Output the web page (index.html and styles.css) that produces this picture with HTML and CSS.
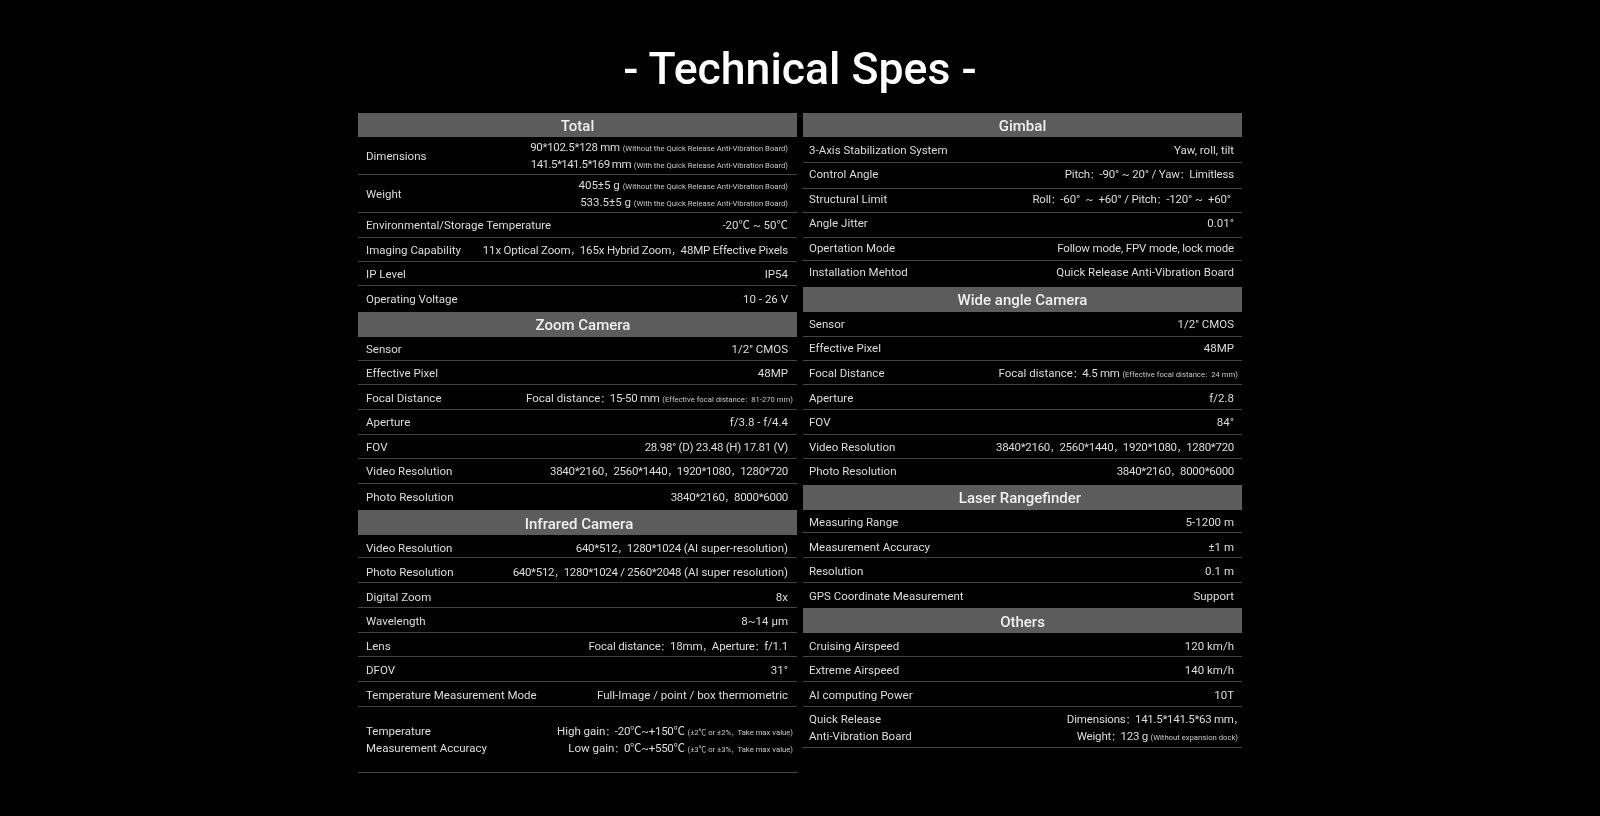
FILE: index.html
```html
<!DOCTYPE html>
<html lang="en">
<head>
<meta charset="utf-8">
<title>Technical Spes</title>
<link rel="stylesheet" href="styles.css">
</head>
<body>
<main class="page">
  <h1 class="title">- Technical Spes -</h1>
  <div class="columns">
    <section class="col col-left">
      <h2 class="head">Total</h2>
      <div class="row"><span>Dimensions</span><span class="val"><b class="nums">90*102.5*128 mm</b> <small>(Without the Quick Release Anti-Vibration Board)</small><br><b class="nums tight">141.5*141.5*169 mm</b> <small>(With the Quick Release Anti-Vibration Board)</small></span></div>
      <div class="row"><span>Weight</span><span class="val">405±5 g <small>(Without the Quick Release Anti-Vibration Board)</small><br>533.5±5 g <small>(With the Quick Release Anti-Vibration Board)</small></span></div>
      <div class="row"><span>Environmental/Storage Temperature</span><span class="val">-20℃ ~ 50℃</span></div>
      <div class="row"><span>Imaging Capability</span><span class="val snug">11x Optical Zoom<i class="cn">，</i>165x Hybrid Zoom<i class="cn">，</i>48MP Effective Pixels</span></div>
      <div class="row"><span>IP Level</span><span class="val">IP54</span></div>
      <div class="row last"><span>Operating Voltage</span><span class="val">10 - 26 V</span></div>
      <h2 class="head off-r">Zoom Camera</h2>
      <div class="row"><span>Sensor</span><span class="val">1/2" CMOS</span></div>
      <div class="row"><span>Effective Pixel</span><span class="val">48MP</span></div>
      <div class="row over-s low"><span>Focal Distance</span><span class="val">Focal distance<i class="cn">：</i><b class="nums">15-50 mm</b> <small>(Effective focal distance<i class="cn">：</i>81-270 mm)</small></span></div>
      <div class="row"><span>Aperture</span><span class="val">f/3.8 - f/4.4</span></div>
      <div class="row"><span>FOV</span><span class="val nums">28.98° (D) 23.48 (H) 17.81 (V)</span></div>
      <div class="row"><span>Video Resolution</span><span class="val nums">3840*2160<i class="cn">，</i>2560*1440<i class="cn">，</i>1920*1080<i class="cn">，</i>1280*720</span></div>
      <div class="row last"><span>Photo Resolution</span><span class="val nums">3840*2160<i class="cn">，</i>8000*6000</span></div>
      <h2 class="head off-s down">Infrared Camera</h2>
      <div class="row lower"><span>Video Resolution</span><span class="val"><b class="nums">640*512<i class="cn">，</i>1280*1024</b> (AI super-resolution)</span></div>
      <div class="row lower"><span>Photo Resolution</span><span class="val"><b class="nums">640*512<i class="cn">，</i>1280*1024 / 2560*2048</b> (AI super resolution)</span></div>
      <div class="row lower"><span>Digital Zoom</span><span class="val">8x</span></div>
      <div class="row low"><span>Wavelength</span><span class="val">8~14 μm</span></div>
      <div class="row low"><span>Lens</span><span class="val snug">Focal distance<i class="cn">：</i>18mm<i class="cn">，</i>Aperture<i class="cn">：</i>f/1.1</span></div>
      <div class="row low"><span>DFOV</span><span class="val">31°</span></div>
      <div class="row low"><span>Temperature Measurement Mode</span><span class="val">Full-Image / point / box thermometric</span></div>
      <div class="row over-s"><span>Temperature<br>Measurement Accuracy</span><span class="val">High gain<i class="cn">：</i><b class="nums">-20℃~+150℃</b> <small>(±2℃ or ±2%<i class="cn">，</i>Take max value)</small><br>Low gain<i class="cn">：</i><b class="nums">0℃~+550℃</b> <small>(±3℃ or ±3%<i class="cn">，</i>Take max value)</small></span></div>
    </section>
    <section class="col col-right">
      <h2 class="head">Gimbal</h2>
      <div class="row"><span>3-Axis Stabilization System</span><span class="val">Yaw, roll, tilt</span></div>
      <div class="row higher"><span>Control Angle</span><span class="val snug">Pitch<i class="cn">：</i>-90° ~ 20° / Yaw<i class="cn">：</i>Limitless</span></div>
      <div class="row under higher"><span>Structural Limit</span><span class="val snug">Roll<i class="cn">：</i>-60° &nbsp;~ &nbsp;+60° / Pitch<i class="cn">：</i>-120° ~ &nbsp;+60°</span></div>
      <div class="row higher"><span>Angle Jitter</span><span class="val">0.01°</span></div>
      <div class="row high"><span>Opertation Mode</span><span class="val snug">Follow mode, FPV mode, lock mode</span></div>
      <div class="row last higher"><span>Installation Mehtod</span><span class="val">Quick Release Anti-Vibration Board</span></div>
      <h2 class="head">Wide angle Camera</h2>
      <div class="row"><span>Sensor</span><span class="val">1/2" CMOS</span></div>
      <div class="row high"><span>Effective Pixel</span><span class="val">48MP</span></div>
      <div class="row over-s"><span>Focal Distance</span><span class="val">Focal distance<i class="cn">：</i><b class="nums">4.5 mm</b> <small>(Effective focal distance<i class="cn">：</i>24 mm)</small></span></div>
      <div class="row low"><span>Aperture</span><span class="val">f/2.8</span></div>
      <div class="row"><span>FOV</span><span class="val">84°</span></div>
      <div class="row"><span>Video Resolution</span><span class="val nums">3840*2160<i class="cn">，</i>2560*1440<i class="cn">，</i>1920*1080<i class="cn">，</i>1280*720</span></div>
      <div class="row last high"><span>Photo Resolution</span><span class="val nums">3840*2160<i class="cn">，</i>8000*6000</span></div>
      <h2 class="head off-l">Laser Rangefinder</h2>
      <div class="row low"><span>Measuring Range</span><span class="val">5-1200 m</span></div>
      <div class="row lower"><span>Measurement Accuracy</span><span class="val">±1 m</span></div>
      <div class="row low"><span>Resolution</span><span class="val">0.1 m</span></div>
      <div class="row last"><span>GPS Coordinate Measurement</span><span class="val">Support</span></div>
      <h2 class="head down">Others</h2>
      <div class="row low"><span>Cruising Airspeed</span><span class="val">120 km/h</span></div>
      <div class="row low"><span>Extreme Airspeed</span><span class="val">140 km/h</span></div>
      <div class="row low"><span>AI computing Power</span><span class="val">10T</span></div>
      <div class="row over-s"><span>Quick Release<br>Anti-Vibration Board</span><span class="val snug">Dimensions<i class="cn">：</i><b class="nums">141.5*141.5*63 mm</b><i class="cn tail">，</i><br>Weight<i class="cn">：</i><b class="nums">123 g</b> <small>(Without expansion dock)</small></span></div>
    </section>
  </div>
</main>
</body>
</html>
```
FILE: styles.css
```css
* { box-sizing: border-box; }
html, body { margin: 0; height: 100%; background: #000; }
body {
  font-family: "Roboto", "Noto Sans CJK SC", sans-serif;
  color: #dcdcdc;
  overflow: hidden;
}
.page {
  display: flex;
  flex-direction: column;
  align-items: center;
  filter: blur(0.3px);
}
.title {
  height: 113px;
  margin: 0;
  padding-top: 25px;
  display: flex;
  align-items: center;
  font-size: 44.6px;
  font-weight: 500;
  color: #fff;
  white-space: pre;
}
.columns {
  display: grid;
  grid-template-columns: 439px 439px;
  column-gap: 6px;
  align-items: start;
}
.col { display: grid; grid-template-columns: minmax(0, 1fr); }
.col-left {
  grid-template-rows: 24px 38px 38px 25px 24px 24px 26px 25px 24px 24px 25px 25px 24px 25px 26px 25px 23px 25px 25px 25px 24px 25px 25px 66px;
}
.col-right {
  grid-template-rows: 24px 26px 26px 24px 25px 23px 26px 25px 25px 24px 24px 25px 25px 24px 26px 25px 23px 25px 25px 25px 25px 24px 25px 25px 41px;
}
.head {
  margin: 0;
  padding-top: 1px;
  background: #5c5c5c;
  display: flex;
  align-items: center;
  justify-content: center;
  font-size: 15px;
  font-weight: 500;
  color: #f0f0f0;
}
.head.off-r { padding-left: 11px; }
.head.off-s { padding-left: 3px; }
.head.off-l { padding-right: 5px; }
.head.down { padding-top: 3px; }
.row {
  display: flex;
  align-items: center;
  justify-content: space-between;
  padding: 1px 9px 0 8px;
  border-bottom: 1px solid #444;
  font-size: 11.5px;
  line-height: 16.6px;
  white-space: nowrap;
}
.col-right .row { padding-left: 6px; padding-right: 8px; }
.row.last { border-bottom: 0; }
.col .row.low { padding-top: 3px; }
.col .row.lower { padding-top: 5px; }
.col .row.high { padding-top: 0; padding-bottom: 1px; }
.col .row.higher { padding-top: 0; padding-bottom: 3px; }
.col .row.over-s { padding-right: 4px; }
.col .row.under { padding-right: 11px; }
.val { text-align: right; }
.nums { font-weight: 400; letter-spacing: -0.3px; }
.nums.tight { letter-spacing: -0.55px; }
.snug { letter-spacing: -0.17px; }
.cn { font-style: normal; font-size: 0.82em; line-height: 1; letter-spacing: 0; }
.cn.tail { margin-right: -5px; }
small { font-size: 7.7px; line-height: 1; letter-spacing: 0; color: #c8c8c8; }
```
